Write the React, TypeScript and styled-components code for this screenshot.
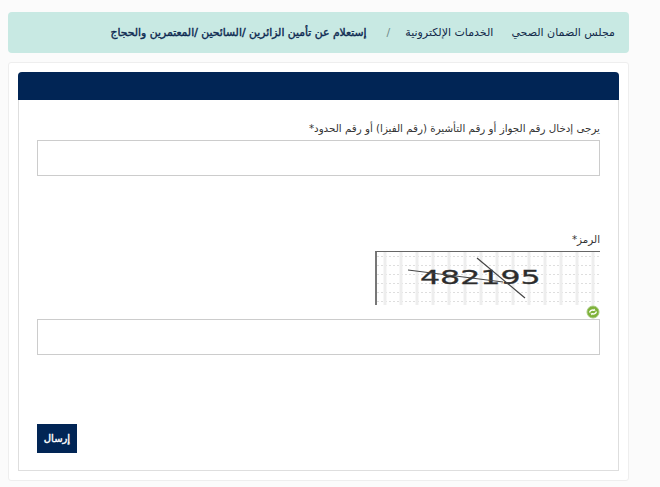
import React from "react";
import styled, { createGlobalStyle } from "styled-components";

const GlobalStyle = createGlobalStyle`
  html, body {
    margin: 0;
    padding: 0;
    background: #fbfbfb;
    font-family: "DejaVu Sans", "Noto Sans", sans-serif;
  }
`;

const Page = styled.div`
  direction: rtl;
  width: 660px;
  height: 487px;
  overflow: hidden;
  box-sizing: border-box;
  padding: 12px 31px 0 8px;
`;

const Breadcrumb = styled.nav`
  height: 41px;
  background: #c8e9e3;
  border-radius: 4px;
  display: flex;
  align-items: center;
  padding: 0 14px;
  color: #12294a;
  font-size: 11px;
  margin-bottom: 9px;
`;

const Crumb = styled.span`
  white-space: nowrap;
  margin-left: 18px;
`;

const Separator = styled.span`
  color: #6f8a8a;
  margin-left: 20px;
  margin-right: -3px;
`;

const ActiveCrumb = styled.span`
  white-space: nowrap;
  font-size: 10.8px;
  color: #0e2a52;
  -webkit-text-stroke: 0.4px #0e2a52;
`;

const Card = styled.section`
  background: #fff;
  border: 1px solid #eeeeee;
  border-radius: 3px;
  padding: 9px;
  height: 419px;
  box-sizing: border-box;
`;

const Panel = styled.div`
  border: 1px solid #dedede;
  border-top: 0;
  border-radius: 4px 4px 0 0;
  height: 399px;
  box-sizing: border-box;
`;

const PanelHeader = styled.div`
  height: 28px;
  margin: 0 -1px;
  background: #012555;
  border-radius: 4px 4px 0 0;
`;

const Form = styled.form`
  padding: 20px 18px 0 18px;
`;

const Label = styled.label`
  display: block;
  font-size: 10.3px;
  line-height: 16px;
  color: #333;
  margin-bottom: 4px;
`;

const TextInput = styled.input`
  display: block;
  width: 100%;
  height: 36px;
  box-sizing: border-box;
  border: 1px solid #ccc;
  background: #fff;
  outline: none;
`;

const CaptchaField = styled.div`
  margin-top: 55px;
`;

const CaptchaImage = styled.div`
  position: relative;
  width: 225px;
  height: 54px;
  box-sizing: border-box;
  border-top: 1px solid #666;
  border-left: 2px solid #777;
  direction: ltr;
  background: #fff;
  overflow: hidden;
`;

const CaptchaCode = styled.span`
  position: absolute;
  left: 43px;
  top: 12px;
  font-family: "DejaVu Sans", sans-serif;
  font-size: 20px;
  line-height: 26px;
  color: #2c2c2c;
  transform: scaleX(1.58);
  transform-origin: left center;
  -webkit-text-stroke: 0.3px #2c2c2c;
`;

const CaptchaLines = styled.svg`
  position: absolute;
  inset: 0;
`;

const RefreshRow = styled.div`
  height: 14px;
  display: flex;
  align-items: center;
`;

const Submit = styled.button`
  display: block;
  margin-top: 69px;
  margin-right: auto;
  width: 40px;
  height: 29px;
  padding: 0;
  border: 0;
  background: #012555;
  color: #fff;
  font-family: inherit;
  font-size: 10px;
  -webkit-text-stroke: 0.4px #fff;
`;

const RefreshIcon = () => (
  <svg width="14" height="14" viewBox="0 0 14 14">
    <circle cx="7" cy="7" r="6" fill="#7fb23a" stroke="#a5c97c" strokeWidth="1" />
    <path d="M3.5 7.5c.6-2 2.4-3 4.6-2.2M10.5 6.5c-.6 2-2.4 3-4.6 2.2" fill="none" stroke="#fff" strokeWidth="1.3" />
    <path d="M8 3.4l1.6 2-2.4.6zM6 10.6l-1.6-2 2.4-.6z" fill="#fff" />
  </svg>
);

const CaptchaNoise = () => (
  <CaptchaLines width="223" height="53" viewBox="0 0 223 53">
    <defs>
      <pattern id="noise" width="16" height="9" patternUnits="userSpaceOnUse">
        <path d="M0 4.5h16" stroke="#dedede" strokeWidth="1" strokeDasharray="2 2" />
        <path d="M8 0v9" stroke="#eeeeee" strokeWidth="3" />
      </pattern>
    </defs>
    <rect width="223" height="53" fill="url(#noise)" />
  </CaptchaLines>
);

const CaptchaStrikes = () => (
  <CaptchaLines width="223" height="53" viewBox="0 0 223 53">
    <path d="M31 18l95 12" stroke="#444" strokeWidth="1" fill="none" />
    <path d="M100 6l48 40" stroke="#444" strokeWidth="1.2" fill="none" />
  </CaptchaLines>
);

const App: React.FC = () => {
  return (
    <>
      <GlobalStyle />
      <Page>
        <Breadcrumb>
          <Crumb>مجلس الضمان الصحي</Crumb>
          <Crumb>الخدمات الإلكترونية</Crumb>
          <Separator>/</Separator>
          <ActiveCrumb>إستعلام عن تأمين الزائرين /السائحين /المعتمرين والحجاج</ActiveCrumb>
        </Breadcrumb>
        <Card>
          <Panel>
            <PanelHeader />
            <Form>
              <Label>يرجى إدخال رقم الجواز أو رقم التأشيرة (رقم الفيزا) أو رقم الحدود*</Label>
              <TextInput />
              <CaptchaField>
                <Label>الرمز*</Label>
                <CaptchaImage>
                  <CaptchaNoise />
                  <CaptchaCode>482195</CaptchaCode>
                  <CaptchaStrikes />
                </CaptchaImage>
                <RefreshRow>
                  <RefreshIcon />
                </RefreshRow>
                <TextInput />
              </CaptchaField>
              <Submit type="button">إرسال</Submit>
            </Form>
          </Panel>
        </Card>
      </Page>
    </>
  );
};

export default App;
